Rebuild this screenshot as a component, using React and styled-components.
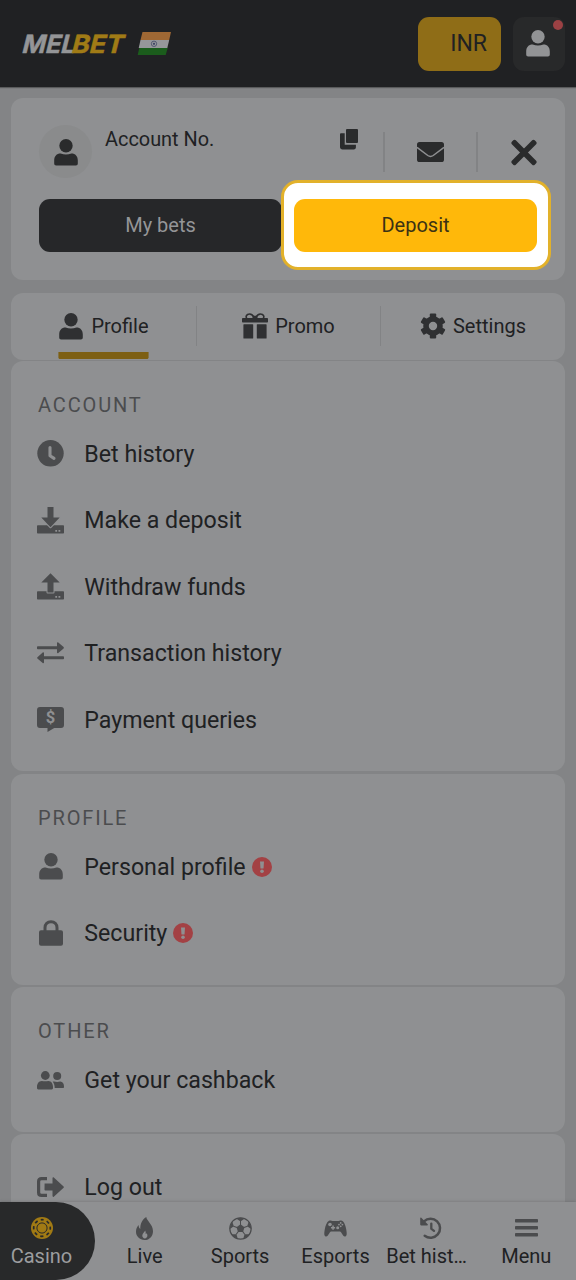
import React from 'react';
import styled, { createGlobalStyle, css } from 'styled-components';

const ink = '#202123';
const grey = '#4b4c4e';
const surface = '#8f9092';
const page = '#838486';
const gold = '#8f6d17';

const GlobalStyle = createGlobalStyle`
  * { box-sizing: border-box; }
  body {
    margin: 0;
    background: ${page};
    font-family: Roboto, "Liberation Sans", sans-serif;
    color: ${ink};
  }
  svg { display: block; flex: none; overflow: visible; }
  button { font-family: inherit; border: none; padding: 0; background: none; color: inherit; }
`;

const Screen = styled.div`
  width: 576px;
  height: 1280px;
  display: flex;
  flex-direction: column;
  overflow: hidden;
  background: ${page};
`;

const Header = styled.header`
  flex: none;
  height: 87px;
  padding: 0 11px 0 18px;
  display: flex;
  align-items: center;
  background: ${ink};
  box-shadow: 0 1px 1px #5a5b5c;
`;

const HeaderActions = styled.div`
  margin-left: auto;
  display: flex;
  gap: 12px;
`;

const Balance = styled.button`
  width: 83px;
  height: 54px;
  padding-right: 14px;
  border-radius: 11px;
  background: ${gold};
  font-size: 23px;
  text-align: right;
`;

const UserButton = styled.button`
  position: relative;
  width: 52px;
  height: 54px;
  padding-right: 2px;
  border-radius: 11px;
  background: #28292a;
  color: #929395;
  display: flex;
  align-items: center;
  justify-content: center;
`;

const Dot = styled.span`
  position: absolute;
  top: 3px;
  right: 2px;
  width: 10px;
  height: 10px;
  border-radius: 50%;
  background: #9b4144;
`;

const Content = styled.main`
  flex: 1;
  min-height: 0;
  overflow: hidden;
  padding: 11px 11px 0;
`;

const Card = styled.section`
  background: ${surface};
  border-radius: 12px;
`;

const AccountCard = styled(Card)`
  height: 182px;
  padding: 27px 28px 0;
  margin-bottom: 13px;
`;

const AccountTop = styled.div`
  display: flex;
  height: 54px;
  margin-bottom: 20px;
`;

const Avatar = styled.div`
  width: 53px;
  height: 53px;
  padding-top: 1px;
  border-radius: 50%;
  background: #8a8b8c;
  color: #2a2b2c;
  display: flex;
  align-items: center;
  justify-content: center;
`;

const AccountInfo = styled.div`
  flex: 1;
  height: 28px;
  padding-left: 13px;
  display: flex;
  align-items: center;
  justify-content: space-between;
  font-size: 19.9px;
`;

const Action = styled.div`
  width: ${({ $width }) => $width}px;
  height: 40px;
  margin-top: 7px;
  margin-left: ${({ $gap }) => $gap || 0}px;
  border-left: 2px solid #828385;
  display: flex;
  align-items: center;
  justify-content: ${({ $end }) => ($end ? 'flex-end' : 'center')};
`;

const AccountButtons = styled.div`
  display: grid;
  grid-template-columns: 243px 243px;
  gap: 12px;
`;

const ActionButton = styled.button`
  position: relative;
  width: 243px;
  height: 53px;
  padding-bottom: 2px;
  border-radius: 11px;
  font-size: 20px;
  background: #262729;
  color: #949597;

  ${({ $primary }) =>
    $primary &&
    css`
      background: #ffb80a;
      color: #3b3214;
    `}
`;

// white frame drawn around the deposit button
const Spotlight = styled.div`
  position: relative;

  &::before {
    content: '';
    position: absolute;
    inset: -19px -14px -18px -13px;
    border: 3px solid #e2b12a;
    border-radius: 17px;
    background: #fff;
  }
`;

const Tabs = styled(Card)`
  height: 66.5px;
  margin-bottom: 1.5px;
  display: grid;
  grid-template-columns: 186px 184px 184px;
  align-items: center;
`;

const TabCell = styled.div`
  height: 40px;
  display: flex;
  justify-content: center;
  align-items: center;
  border-right: 1px solid #828385;

  &:last-child { border-right: none; }
`;

const Tab = styled.div`
  height: 66px;
  display: flex;
  align-items: center;
  gap: 7px;
  font-size: 20px;
  color: ${ink};
  box-shadow: ${({ $active }) => ($active ? 'inset 0 -7px 0 0 #7d5f13' : 'none')};
  clip-path: ${({ $active }) => ($active ? 'inset(0 0 0 0 round 2px)' : 'none')};

  svg { color: #2f3032; }
`;

const Sections = styled.div`
  display: flex;
  flex-direction: column;
  gap: 2.5px;
`;

const Section = styled(Card)`
  padding: ${({ $plain }) => ($plain ? 19.5 : 32)}px 27px 18.7px;
`;

const SectionTitle = styled.h2`
  margin: 0 0 3.3px;
  font-size: 20px;
  font-weight: 400;
  line-height: 24px;
  letter-spacing: 1.85px;
  text-transform: uppercase;
  color: ${grey};
`;

const Row = styled.div`
  height: 66.5px;
  display: flex;
  align-items: center;
  font-size: 23.2px;
`;

const RowIcon = styled.span`
  width: 27px;
  margin-left: -1px;
  margin-right: 20.3px;
  display: flex;
  justify-content: center;
  color: ${grey};
`;

const RowLabel = styled.span`
  margin-right: 6px;
`;

const BottomNav = styled.nav`
  position: relative;
  flex: none;
  height: 78px;
  display: flex;
  padding-right: 2px;
  background: ${surface};
  box-shadow: 0 0 3px rgba(60, 60, 62, 0.35);
`;

const NavItem = styled.div`
  flex: 1;
  min-width: 0;
  padding: 13px 3px 0;
  display: flex;
  flex-direction: column;
  align-items: center;
`;

const CasinoItem = styled(NavItem)`
  flex: 0 0 95px;
  margin-right: 2px;
  padding: 13px 12px 0 0;
  border-radius: 0 39px 39px 0;
  background: #28292a;
  color: #9c9d9f;
`;

const NavIcon = styled.span`
  height: 26px;
  display: flex;
  align-items: center;
  color: ${grey};
`;

const NavLabel = styled.span`
  width: 100%;
  margin-top: 3px;
  font-size: 20px;
  line-height: 24px;
  text-align: ${({ $start }) => ($start ? 'left' : 'center')};
  white-space: nowrap;
`;

const Logo = () => (
  <svg width="154" height="34" viewBox="18 27 154 34">
    <g transform="translate(0 52.800) skewX(-14)" fontFamily="Inter, sans-serif" fontWeight="700" fontSize="25" strokeWidth=".5">
      <text x="21" y="0" fill="#949597" stroke="#949597" textLength="53" lengthAdjust="spacingAndGlyphs">MEL</text>
      <text x="70.500" y="0" fill="#a07b16" stroke="#a07b16" textLength="52" lengthAdjust="spacingAndGlyphs">BET</text>
    </g>
    <path d="M142.500 32H171l-1.800 8h-28.700z" fill="#9f6834" />
    <path d="M140.500 40h28.700l-1.900 8h-28.600z" fill="#96979a" />
    <path d="M139.300 48h28.400l-2 7h-28z" fill="#1b5c1c" />
    <circle cx="154" cy="43.800" r="2.700" fill="none" stroke="#3a4263" strokeWidth=".7" />
    <circle cx="154" cy="43.800" r="1.100" fill="#3a4263" />
  </svg>
);

const UserIcon = ({ w = 24 }) => (
  <svg width={w} height="27" viewBox="0 0 24 27" fill="currentColor">
    <circle cx="12" cy="6.700" r="6.700" />
    <path d="M.2 21.600C.2 17.300 2.600 14.600 6.600 14.600c1.900.6 3.500.8 5.400.8s3.500-.2 5.400-.8c4 0 6.400 2.700 6.400 7v3c0 1.200-.7 1.900-1.900 1.900H2.100C.9 26.500.2 25.800.2 24.600z" />
  </svg>
);

const CopyIcon = () => (
  <svg width="18" height="21" viewBox="0 0 18 21" fill="#2a2b2c">
    <rect x="6" y="0" width="12" height="14" rx="1" />
    <path d="M1.200 4.200H4.700v11.600h11.200v2.400c0 1.300-.8 2.200-2.100 2.200H2.500C1 20.400 0 19.400 0 18V5.400c0-.8.4-1.200 1.200-1.200z" />
  </svg>
);

const MailIcon = () => (
  <svg width="27" height="20" viewBox="0 0 27 20">
    <rect width="27" height="20" rx="2.600" fill="#2a2b2c" />
    <path d="M0 5.300l10.800 8.200q2.700 1.900 5.400 0L27 5.300" fill="none" stroke={surface} strokeWidth="1.500" />
  </svg>
);

const CloseIcon = () => (
  <svg width="27" height="27" viewBox="-.5 0 27 27" fill="#2a2b2c">
    <rect x="-2.700" y="10.700" width="32.400" height="5.600" rx="1.800" transform="rotate(45 13.5 13.5)" />
    <rect x="-2.700" y="10.700" width="32.400" height="5.600" rx="1.800" transform="rotate(-45 13.5 13.5)" />
  </svg>
);

const GiftIcon = () => (
  <svg width="26" height="26" viewBox="0 0 26 26" fill="currentColor">
    <rect x="0" y="5" width="26" height="4.600" rx=".8" />
    <rect x="1.400" y="11.200" width="9.800" height="14.400" rx=".6" />
    <rect x="14.800" y="11.200" width="9.800" height="14.400" rx=".6" />
    <path d="M12.600 5C10.500 1.300 7.500.6 5.600 1.500 3.600 2.600 3.900 4.600 5 5.600M13.400 5c2.100-3.700 5.100-4.400 7-3.500 2 1.100 1.700 3.100.6 4.100" fill="none" stroke="currentColor" strokeWidth="1.600" />
    <rect x="10.500" y="2.800" width="5" height="3" rx="1" />
  </svg>
);

const GearIcon = () => (
  <svg width="26" height="26" viewBox="0 0 26 26">
    <g fill="currentColor">
      {[0, 60, 120, 180, 240, 300].map((a) => (
        <rect key={a} x="9.800" y=".4" width="6.400" height="6" rx="1" transform={`rotate(${a} 13 13)`} />
      ))}
    </g>
    <circle cx="13" cy="13" r="7" fill="none" stroke="currentColor" strokeWidth="5.600" />
  </svg>
);

const ClockIcon = () => (
  <svg width="27" height="27" viewBox="0 0 27 27">
    <circle cx="13.500" cy="13.300" r="13.200" fill="currentColor" />
    <path d="M13 7.500v8.300l4 2.600" fill="none" stroke={surface} strokeWidth="3.100" strokeLinecap="round" strokeLinejoin="round" />
  </svg>
);

const DepositIcon = () => (
  <svg width="27" height="27" viewBox="0 0 27 27">
    <rect y="18.300" width="27" height="8.300" rx=".8" fill="currentColor" />
    <path d="M10.500 0h6v10.500h6.200l-9.200 9.700-9.200-9.700h6.200z" fill="currentColor" stroke={surface} strokeWidth="2" paintOrder="stroke" strokeLinejoin="round" />
    <path d="M18.300 23h1.800v1.800h-1.800zM21.500 23h1.800v1.800h-1.800z" fill={surface} />
  </svg>
);

const WithdrawIcon = () => (
  <svg width="27" height="27" viewBox="0 0 27 27">
    <rect y="18.300" width="27" height="8.300" rx=".8" fill="currentColor" />
    <path d="M13.500.3l9.200 9.300h-6.200v10h-6v-10H4.300z" fill="currentColor" stroke={surface} strokeWidth="2" paintOrder="stroke" strokeLinejoin="round" />
    <path d="M18.300 23h1.800v1.800h-1.800zM21.500 23h1.800v1.800h-1.800z" fill={surface} />
  </svg>
);

const TransferIcon = () => (
  <svg width="27" height="22" viewBox="0 0 27 22" fill="currentColor">
    <path d="M.8 4.200H20V.9c0-.7.8-1 1.300-.5l5.300 4.700c.4.400.4.900 0 1.300l-5.300 4.600c-.5.400-1.300.1-1.300-.6V7.200H.8C.3 7.200 0 6.900 0 6.400V5c0-.5.3-.8.8-.8z" />
    <path d="M26.200 14.300H7V11c0-.7-.8-1-1.300-.5L.4 15.200c-.4.4-.4.900 0 1.300l5.300 4.600c.5.400 1.300.1 1.300-.6v-3.200h19.200c.5 0 .8-.3.800-.8v-1.400c0-.5-.3-.8-.8-.8z" />
  </svg>
);

const PaymentIcon = () => (
  <svg width="27" height="25" viewBox="0 0 27 25">
    <path d="M3 0h21c2 0 3 1 3 3v15c0 2-1 3-3 3h-6.800L10.500 25v-4H3c-2 0-3-1-3-3V3c0-2 1-3 3-3z" fill="currentColor" />
    <text x="13.500" y="16.200" textAnchor="middle" fontFamily="Roboto" fontSize="16.500" fontWeight="700" fill={surface}>$</text>
  </svg>
);

const LockIcon = () => (
  <svg width="24" height="26" viewBox="0 0 24 26">
    <rect y="10.200" width="24" height="15.500" rx="2" fill="currentColor" />
    <path d="M6 11V7.800C6 4 8.500 1.700 12 1.700s6 2.300 6 6.100V11" fill="none" stroke="currentColor" strokeWidth="3" />
  </svg>
);

const FriendsIcon = () => (
  <svg width="27" height="19" viewBox="0 0 27 19" fill="currentColor">
    <circle cx="8.300" cy="4.500" r="4.400" />
    <circle cx="20.200" cy="5" r="4" />
    <path d="M0 16c0-3.600 1.700-5.900 4.800-6.100 2.300.6 4.300.6 6.600 0 3 .2 4.600 2.500 4.600 6.100v1.100c0 .8-.5 1.300-1.300 1.300H1.300C.5 18.400 0 17.900 0 17.100z" />
    <path d="M15.700 10.500h1.300c2.300.5 4.100.5 6.300 0 2.400.2 3.700 2.300 3.700 5v.6c0 .6-.4 1-1 1h-8.300c0-2.600-.6-4.700-2-6.600z" />
  </svg>
);

const LogoutIcon = () => (
  <svg width="27" height="20" viewBox="0 0 27 20">
    <path d="M10 1.600H4.600Q1.600 1.600 1.600 4.600v10.800q0 3 3 3H10" fill="none" stroke="currentColor" strokeWidth="3.200" />
    <path d="M7.600 6.500h7.900V.9c0-.7.800-1 1.300-.5l9.800 9c.4.400.4.900 0 1.300l-9.800 9c-.5.500-1.300.1-1.300-.6v-5.500H8.300c-.5 0-.8-.3-.8-.8z" fill="currentColor" />
  </svg>
);

const AlertIcon = () => (
  <svg width="20" height="20" viewBox="0 0 20 20">
    <circle cx="10" cy="10" r="10" fill="#a34144" />
    <path d="M8 4.600h4l-.5 7H8.500z" fill={surface} />
    <circle cx="10" cy="14.300" r="1.800" fill={surface} />
  </svg>
);

const ChipIcon = () => (
  <svg width="22" height="22" viewBox="0 0 22 22">
    <circle cx="11" cy="11" r="11" fill="#a17a14" />
    <circle cx="11" cy="11" r="5.100" fill="none" stroke="#28292a" strokeWidth="1" />
    <circle cx="11" cy="11" r="8.300" fill="none" stroke="#28292a" strokeWidth="1.700" strokeDasharray="3.2 3.32" strokeDashoffset="1.600" transform="rotate(-90 11 11)" />
  </svg>
);

const FireIcon = () => (
  <svg width="17" height="23" viewBox="0 0 17 23" fill="currentColor" fillRule="evenodd">
    <path d="M10.300 0c.2 3.800 6.700 7.300 6.700 14.200 0 5-3.500 8.800-8.400 8.800S0 19.400 0 14.800c0-2.600 1-5 2.600-6.700.1 1.900.6 3.200 1.700 4C4.200 7.300 5.900 2.700 10.300 0zM9.200 13.400c-.4 1.300-2.900 2.700-2.900 5.100 0 1.700 1.100 2.900 2.500 2.900s2.600-1.200 2.600-2.900c0-.9-.3-1.600-.7-2.200-.3.400-.6.600-1 .7.100-1.300 0-2.500-.5-3.600z" />
  </svg>
);

const BallIcon = () => (
  <svg width="23" height="23" viewBox="0 0 23 23">
    <circle cx="11.500" cy="11.500" r="10.700" fill="none" stroke="currentColor" strokeWidth="1.200" />
    <path d="M11.500 7.300l4 2.900-1.500 4.700H9L7.500 10.200z" fill="currentColor" />
    {[0, 72, 144, 216, 288].map((a) => (
      <g key={a} transform={`rotate(${a} 11.5 11.5)`}>
        <path d="M11.500 8V4" stroke="currentColor" strokeWidth="1" />
        <path d="M7.300 1.400Q11.500 0 15.700 1.400L11.500 4.500z" fill="currentColor" />
      </g>
    ))}
  </svg>
);

const GamepadIcon = () => (
  <svg width="23" height="17" viewBox="0 0 23 17">
    <path d="M5 .8C6.200.2 7.600.3 8.400 1h6.200c.8-.7 2.200-.8 3.400-.2 2.300 1.200 3.600 5 4.300 9 .6 3.600.8 6-.8 6.600-1.600.5-2.700-1-4-3.300-.6-1.100-1.200-1.500-2.300-1.500H7.800c-1.100 0-1.700.4-2.300 1.500-1.300 2.300-2.400 3.800-4 3.300-1.600-.6-1.400-3-.8-6.600.7-4 2-7.800 4.300-9z" fill="currentColor" />
    <g fill={surface}>
      <circle cx="6" cy="4.500" r="1.800" />
      <path d="M8.300 5.600h1.500v1.300h1.300v1.500H9.800v1.300H8.300V8.400H7V6.900h1.300z" />
      <circle cx="16.700" cy="2.900" r=".9" />
      <circle cx="16.700" cy="6.300" r=".9" />
      <circle cx="15" cy="4.600" r=".9" />
      <circle cx="18.400" cy="4.600" r=".9" />
      <circle cx="13.700" cy="7.700" r="1.500" />
    </g>
  </svg>
);

const HistoryIcon = () => (
  <svg width="22" height="23" viewBox="0 0 22 23">
    <path d="M4 4.300A9.500 9.500 0 1 1 4.700 18.700" fill="none" stroke="currentColor" strokeWidth="2.500" strokeLinecap="round" />
    <path d="M.2 1.200v6.400c0 .5.3.8.8.8h6.200c.6 0 .9-.7.5-1.200L1.300.8C.9.4.2.600.2 1.200z" fill="currentColor" />
    <path d="M11.300 6.600v5.200l2.700 2.100" fill="none" stroke="currentColor" strokeWidth="2.300" strokeLinecap="round" />
  </svg>
);

const MenuIcon = () => (
  <svg width="23" height="18" viewBox="0 0 23 18" fill="currentColor">
    <rect width="23" height="3.600" rx=".8" />
    <rect y="7" width="23" height="3.600" rx=".8" />
    <rect y="14" width="23" height="3.600" rx=".8" />
  </svg>
);

const tabs = [
  { label: 'Profile', icon: <UserIcon w={26} />, active: true },
  { label: 'Promo', icon: <GiftIcon /> },
  { label: 'Settings', icon: <GearIcon /> },
];

const sections = [
  {
    title: 'Account',
    rows: [
      { label: 'Bet history', icon: <ClockIcon /> },
      { label: 'Make a deposit', icon: <DepositIcon /> },
      { label: 'Withdraw funds', icon: <WithdrawIcon /> },
      { label: 'Transaction history', icon: <TransferIcon /> },
      { label: 'Payment queries', icon: <PaymentIcon /> },
    ],
  },
  {
    title: 'Profile',
    rows: [
      { label: 'Personal profile', icon: <UserIcon />, alert: true },
      { label: 'Security', icon: <LockIcon />, alert: true },
    ],
  },
  { title: 'Other', rows: [{ label: 'Get your cashback', icon: <FriendsIcon /> }] },
  { rows: [{ label: 'Log out', icon: <LogoutIcon /> }] },
];

const navItems = [
  { label: 'Live', icon: <FireIcon /> },
  { label: 'Sports', icon: <BallIcon /> },
  { label: 'Esports', icon: <GamepadIcon /> },
  { label: 'Bet hist…', icon: <HistoryIcon />, start: true },
  { label: 'Menu', icon: <MenuIcon /> },
];

const App = () => {
  return (
    <>
      <GlobalStyle />
      <Screen>
        <Header>
          <Logo />
          <HeaderActions>
            <Balance>INR</Balance>
            <UserButton>
              <UserIcon />
              <Dot />
            </UserButton>
          </HeaderActions>
        </Header>
        <Content>
          <AccountCard>
            <AccountTop>
              <Avatar><UserIcon /></Avatar>
              <AccountInfo>
                <span>Account No.</span>
                <CopyIcon />
              </AccountInfo>
              <Action $width={93} $gap={25}><MailIcon /></Action>
              <Action $width={61} $end><CloseIcon /></Action>
            </AccountTop>
            <AccountButtons>
              <ActionButton>My bets</ActionButton>
              <Spotlight>
                <ActionButton $primary>Deposit</ActionButton>
              </Spotlight>
            </AccountButtons>
          </AccountCard>
          <Tabs>
            {tabs.map((tab) => (
              <TabCell key={tab.label}>
                <Tab $active={tab.active}>
                  {tab.icon}
                  {tab.label}
                </Tab>
              </TabCell>
            ))}
          </Tabs>
          <Sections>
            {sections.map((section, index) => (
              <Section key={index} $plain={!section.title}>
                {section.title && <SectionTitle>{section.title}</SectionTitle>}
                {section.rows.map((row) => (
                  <Row key={row.label}>
                    <RowIcon>{row.icon}</RowIcon>
                    <RowLabel>{row.label}</RowLabel>
                    {row.alert && <AlertIcon />}
                  </Row>
                ))}
              </Section>
            ))}
          </Sections>
        </Content>
        <BottomNav>
          <CasinoItem>
            <NavIcon><ChipIcon /></NavIcon>
            <NavLabel>Casino</NavLabel>
          </CasinoItem>
          {navItems.map((item) => (
            <NavItem key={item.label}>
              <NavIcon>{item.icon}</NavIcon>
              <NavLabel $start={item.start}>{item.label}</NavLabel>
            </NavItem>
          ))}
        </BottomNav>
      </Screen>
    </>
  );
};

export default App;
